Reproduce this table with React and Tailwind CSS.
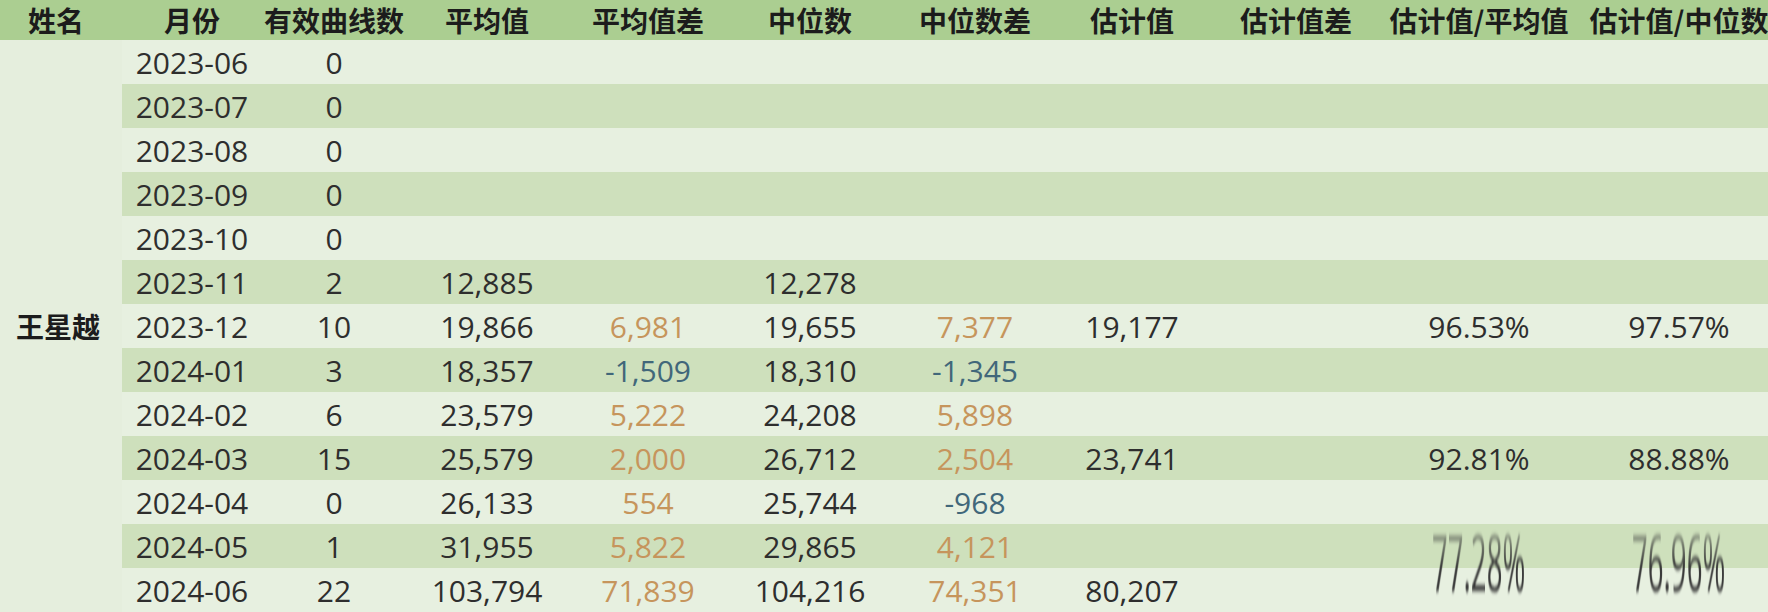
import React from "react";

const rows = [
  ["2023-06", "0"],
  ["2023-07", "0"],
  ["2023-08", "0"],
  ["2023-09", "0"],
  ["2023-10", "0"],
  ["2023-11", "2", "12,885", "", "12,278"],
  ["2023-12", "10", "19,866", "6,981", "19,655", "7,377", "19,177", "", "96.53%", "97.57%"],
  ["2024-01", "3", "18,357", "-1,509", "18,310", "-1,345"],
  ["2024-02", "6", "23,579", "5,222", "24,208", "5,898"],
  ["2024-03", "15", "25,579", "2,000", "26,712", "2,504", "23,741", "", "92.81%", "88.88%"],
  ["2024-04", "0", "26,133", "554", "25,744", "-968"],
  ["2024-05", "1", "31,955", "5,822", "29,865", "4,121"],
  ["2024-06", "22", "103,794", "71,839", "104,216", "74,351", "80,207", "", "77.28%", "76.96%"],
];

const headers = ["月份", "有效曲线数", "平均值", "平均值差", "中位数", "中位数差", "估计值", "估计值差", "估计值/平均值", "估计值/中位数"];

function cellColor(ci, v) {
  if (ci === 3 || ci === 5) {
    return v.startsWith("-") ? "text-[#41677a]" : "text-[#c6955c]";
  }
  return "text-[#2e2e2e]";
}

export default function App() {
  return (
    <div className="w-[1768px] h-[612px] overflow-hidden bg-[#e6efdf] font-['Open_Sans','Noto_Sans_CJK_SC',sans-serif]">
      <div className="grid grid-cols-[122px_140px_144px_162px_160px_164px_166px_148px_180px_186px_214px] h-[40px] bg-[#abce91] items-center">
        <div className="pr-[10px] text-center whitespace-nowrap font-['Noto_Sans_CJK_SC',sans-serif] font-bold text-[28px] leading-[41px] text-[#1c1c1c]">姓名</div>
        {headers.map((h) => (
          <div key={h} className="text-center whitespace-nowrap font-['Noto_Sans_CJK_SC',sans-serif] font-bold text-[28px] leading-[41px] text-[#1c1c1c]">
            {h}
          </div>
        ))}
      </div>
      <div className="flex">
        <div className="w-[122px] shrink-0 flex items-center justify-center pr-[6px] bg-[#e5eedd]">
          <span className="font-['Noto_Sans_CJK_SC',sans-serif] font-bold text-[28px] text-[#1c1c1c]">王星越</span>
        </div>
        <div className="flex-1 flex flex-col">
          {rows.map((r, ri) => {
            const last = ri === rows.length - 1;
            return (
              <div
                key={ri}
                className={`grid grid-cols-[140px_144px_162px_160px_164px_166px_148px_180px_186px_214px] h-[44px] items-center ${ri % 2 === 0 ? "bg-[#e7f0e0]" : "bg-[#cee0bc]"}`}
              >
                {Array.from({ length: 10 }).map((_, ci) => {
                  const v = r[ci] || "";
                  if (last && (ci === 8 || ci === 9)) {
                    return (
                      <div key={ci} className="text-center whitespace-nowrap text-[30px] leading-[1.3]">
                        <span className="inline-block origin-bottom scale-y-[2.6] scale-x-[0.92] translate-y-[2px] text-[#3a3a3a] blur-[0.8px] [mask-image:linear-gradient(to_bottom,transparent,black_55%)]">
                          {v}
                        </span>
                      </div>
                    );
                  }
                  return (
                    <div key={ci} className={`text-center whitespace-nowrap text-[30px] leading-[1.3] ${cellColor(ci, v)}`}>
                      {v}
                    </div>
                  );
                })}
              </div>
            );
          })}
        </div>
      </div>
    </div>
  );
}
